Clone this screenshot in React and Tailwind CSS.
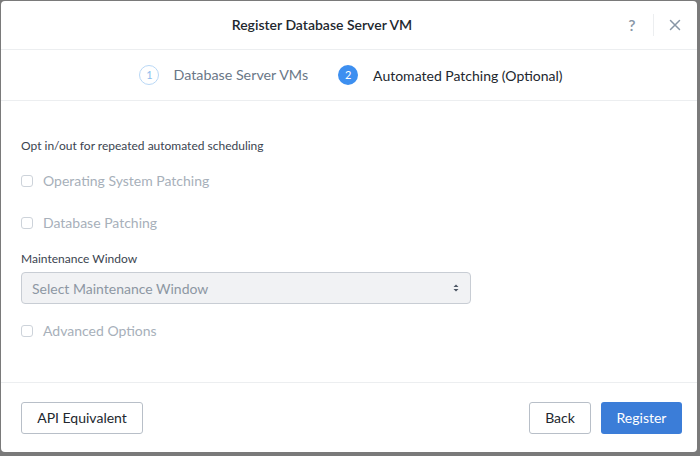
import React from 'react';

const Checkbox = ({ label }) => (
  <label className="flex items-center gap-[10px] h-[20px] cursor-not-allowed">
    <span className="w-[12px] h-[12px] rounded-[3px] border border-[#cdd3da] bg-white" />
    <span className="text-[14px] leading-[20px] text-[#a7b0ba]">{label}</span>
  </label>
);

const App = () => {
  return (
    <div className="w-[700px] h-[456px] bg-[#7a7a7a] pt-[1px] pl-[1px] pr-[3px] pb-[4px]" style={{ fontFamily: 'Lato, "Open Sans", sans-serif' }}>
      <div className="h-full bg-white rounded-[4px] flex flex-col">
        {/* Header */}
        <div className="h-[49px] border-b border-[#eceef0] flex items-center pr-[12px]">
          <h1 className="flex-1 text-center text-[14px] leading-[20px] font-semibold text-[#22272e] pl-[22px]">
            Register Database Server VM
          </h1>
          <div className="h-full flex items-center">
            <span className="text-[16px] font-semibold text-[#8896a6] w-[20px] text-center ml-[1px]">?</span>
            <span className="w-px h-[22px] bg-[#eceef0] mx-[11px]" />
            <svg width="12" height="12" viewBox="0 0 12 12" className="mx-[4px]">
              <path d="M1.5 1.5 L10.5 10.5 M10.5 1.5 L1.5 10.5" stroke="#8896a6" strokeWidth="1.5" strokeLinecap="round" />
            </svg>
          </div>
        </div>

        {/* Steps */}
        <div className="h-[51px] border-b border-[#eceef0] flex items-center justify-center gap-[30px] pl-[4px]">
          <div className="flex items-center gap-[14px]">
            <span className="w-[20px] h-[20px] rounded-full border border-[#b9d8f6] text-[#8cbcec] text-[11px] flex items-center justify-center">1</span>
            <span className="text-[14.3px] text-[#6a7787]">Database Server VMs</span>
          </div>
          <div className="flex items-center gap-[15px]">
            <span className="w-[20px] h-[20px] rounded-full bg-[#3d8ff0] text-white text-[11px] flex items-center justify-center">2</span>
            <span className="text-[14px] text-[#22272e]">Automated Patching (Optional)</span>
          </div>
        </div>

        {/* Body */}
        <div className="flex-1 px-[20px] pt-[37px]">
          <p className="text-[12px] leading-[16px] text-[#3b4450] mb-[17px]">Opt in/out for repeated automated scheduling</p>
          <div className="flex flex-col gap-[22px]">
            <Checkbox label="Operating System Patching" />
            <Checkbox label="Database Patching" />
          </div>
          <p className="text-[12px] leading-[16px] text-[#3b4450] mt-[18px] mb-[5px]">Maintenance Window</p>
          <div className="w-[450px] h-[32px] rounded-[4px] border border-[#c8cdd4] bg-[#f1f2f4] flex items-center justify-between pl-[10px] pr-[11px]">
            <span className="text-[14px] text-[#8d97a3]">Select Maintenance Window</span>
            <svg width="6" height="10" viewBox="0 0 6 10">
              <path d="M0.5 4 L3 1.5 L5.5 4 Z M0.5 6 L3 8.5 L5.5 6 Z" fill="#4b5563" />
            </svg>
          </div>
          <div className="mt-[17px]">
            <Checkbox label="Advanced Options" />
          </div>
        </div>

        {/* Footer */}
        <div className="h-[70px] border-t border-[#eceef0] flex items-center justify-between pl-[20px] pr-[15px]">
          <button className="h-[32px] w-[122px] rounded-[3px] border border-[#b8bfc8] bg-white text-[14px] text-[#22272e]">
            API Equivalent
          </button>
          <div className="flex items-center gap-[10px]">
            <button className="h-[32px] w-[62px] rounded-[3px] border border-[#b8bfc8] bg-white text-[14px] text-[#22272e]">
              Back
            </button>
            <button className="h-[32px] w-[81px] rounded-[3px] bg-[#3b7dd8] text-[14px] text-white">
              Register
            </button>
          </div>
        </div>
      </div>
    </div>
  );
};

export default App;
